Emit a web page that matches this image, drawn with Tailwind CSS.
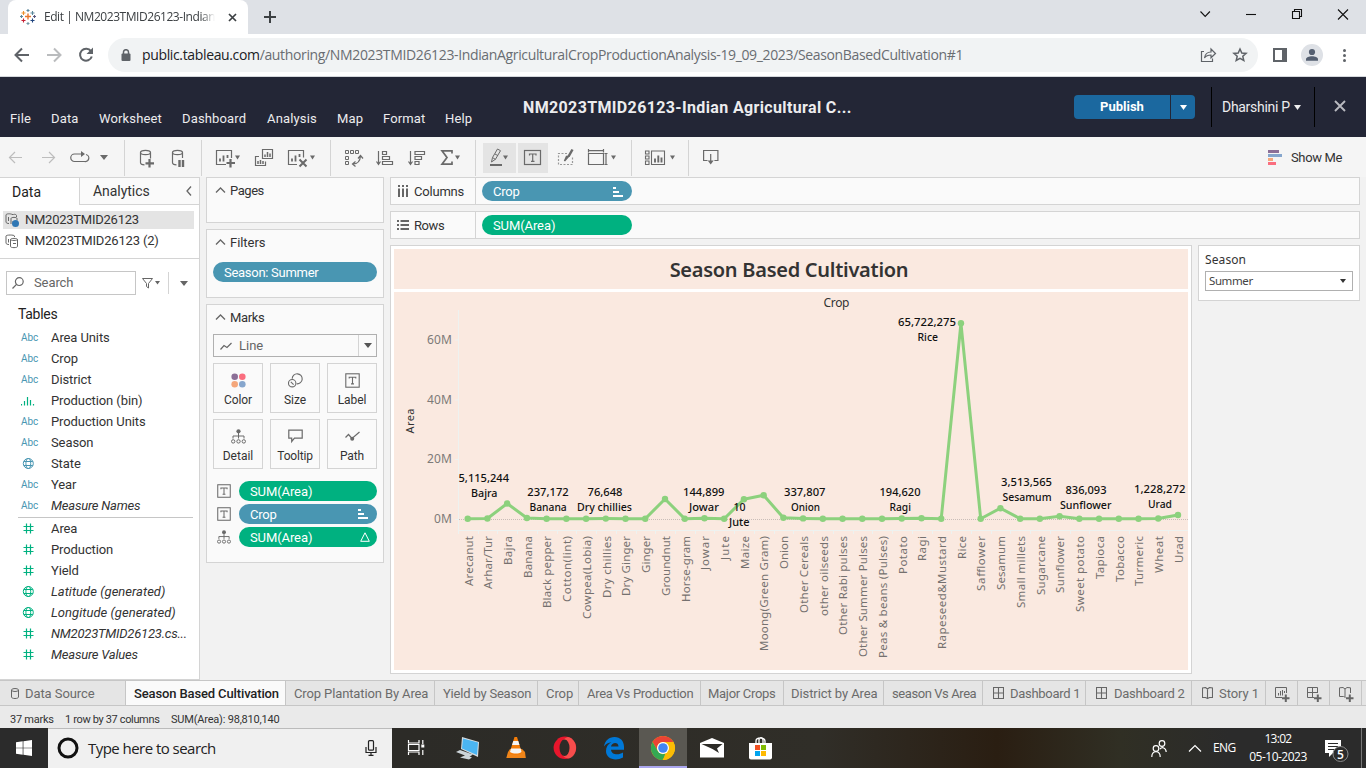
<!DOCTYPE html>
<html lang="en">
<head>
<meta charset="utf-8">
<title>Edit | NM2023TMID26123-Indian Agricultural Crop Production Analysis</title>
<script src="https://cdn.jsdelivr.net/npm/@tailwindcss/browser@4"></script>
</head>
<body class="w-[1366px] h-[768px] overflow-hidden flex flex-col bg-[#f2f2f2] font-['Roboto',sans-serif] text-[13px] text-[#333] leading-none whitespace-nowrap">

<!-- Browser tab strip -->
<div class="h-[34px] bg-[#dee1e6] flex shrink-0 font-['Open_Sans',sans-serif]">
  <div class="ml-2 w-60 h-[34px] bg-white rounded-t-lg flex items-center">
    <svg class="ml-3 w-4 h-4" viewBox="20 9 16 16" fill="none" stroke-width="1.1">
      <path stroke="#e8762d" stroke-width="1.4" d="M28 13.5v6M25 16.5h6"/>
      <path stroke="#eb912c" d="M23.5 11v4M21.5 13h4"/><path stroke="#5b879b" d="M32.5 11v4M30.5 13h4M28 9v3M26.5 10.5h3M21.500 15v3M20 16.500h3"/>
      <path stroke="#c72035" d="M23.500 18.500v4M21.500 20.500h4"/><path stroke="#1f447e" d="M32.500 18.500v4M30.500 20.500h4"/>
      <path stroke="#7099a6" d="M28 22v3M26.500 23.500h3"/><path stroke="#59587f" d="M34.500 15v3M33 16.500h3"/>
    </svg>
    <div class="ml-2 w-[171px] overflow-hidden text-[12px] leading-5 tracking-[-0.45px] text-[#3c4043] [mask-image:linear-gradient(to_right,#000_92%,transparent)]">Edit | NM2023TMID26123-Indian</div>
    <svg class="ml-[13px] w-[9px] h-[9px]" viewBox="0 0 9 9" stroke="#3c4043" stroke-width="1.7"><path d="M1 1l7 7M8 1l-7 7"/></svg>
  </div>
  <svg class="ml-4 mt-[11px] w-3 h-3" viewBox="0 0 12 12" stroke="#3c4043" stroke-width="2"><path d="M6 0v12M0 6h12"/></svg>
  <svg class="ml-auto w-[176px] h-[34px]" viewBox="1190 0 176 34" fill="none" stroke="#111" stroke-width="1.1">
    <path d="M1200.500 11.500l4.700 5 4.700-5"/><path d="M1246 14.500h10"/>
    <path d="M1292.500 11.500h7v7h-7zM1294.500 11v-1.500h7v7h-1.500"/><path d="M1338 9.500l10 10M1348 9.500l-10 10"/>
  </svg>
</div>

<!-- Address bar -->
<div class="h-[43px] bg-white border-b border-[#d5d8dc] flex items-center shrink-0 font-['Open_Sans',sans-serif]">
  <svg class="w-[108px] h-[42px] shrink-0" viewBox="0 34 108 42" fill="none" stroke-width="2">
    <path stroke="#5f6368" d="M29 55H16.500M22 48.500L15.500 55l6.500 6.500"/>
    <path stroke="#babcbe" d="M47 55h12.500M54 48.500l6.500 6.500-6.500 6.500"/>
    <path stroke="#5f6368" d="M91 51.200a6 6 0 1 0 .8 5.300"/><path fill="#5f6368" d="M93 47.500v6.500h-6.500z"/>
  </svg>
  <div class="w-[1150px] h-[34px] rounded-full bg-[#f1f3f4] flex items-center">
    <svg class="ml-[13px] w-[10px] h-[13px]" viewBox="0 0 10 13"><path fill="none" stroke="#5f6368" stroke-width="1.500" d="M2.500 5.500V3a2.500 2.300 0 0 1 5 0v2.500"/><rect x="0.500" y="4.500" width="9" height="7.500" rx="1" fill="#5f6368"/></svg>
    <div class="ml-[11px] text-[14px] leading-5 tracking-[-0.355px] text-[#696d72]"><span class="text-[#202124]">public.tableau.com</span>/authoring/NM2023TMID26123-IndianAgriculturalCropProductionAnalysis-19_09_2023/SeasonBasedCultivation#1</div>
    <svg class="ml-auto mr-[9px] w-[50px] h-5" viewBox="1199 45 50 20" fill="none" stroke="#5f6368" stroke-width="1.200">
      <path d="M1204 51.500h-2.500v10h11v-3M1204.500 58c.5-3.500 3-6 6.500-6v-3l4.500 4.500-4.500 4.300V55c-3 0-5 .8-6.500 3z"/>
      <path stroke-width="1.500" d="M1240 49l1.800 4 4.300.4-3.300 2.900 1 4.200-3.800-2.200-3.800 2.200 1-4.200-3.300-2.900 4.300-.4z"/>
    </svg>
  </div>
  <svg class="w-[108px] h-[42px]" viewBox="1258 34 108 42">
    <path fill="#5f6368" fill-rule="evenodd" d="M1273 48h14v14h-14zM1275 50v10h7v-10z"/>
    <circle cx="1312" cy="55" r="11" fill="#dee1e6"/><circle cx="1312" cy="52" r="3.100" fill="#535e70"/><path fill="#535e70" d="M1306 60.800v-1.500c0-2 3-3 6-3s6 1 6 3v1.500z"/>
    <g fill="#5f6368"><circle cx="1344.500" cy="50.500" r="1.500"/><circle cx="1344.500" cy="55.500" r="1.500"/><circle cx="1344.500" cy="60.500" r="1.500"/></g>
  </svg>
</div>

<!-- Tableau header -->
<div class="h-[60px] bg-[#232636] flex shrink-0 text-[#ececee]">
  <div class="flex items-end h-[50px] pl-[10px] w-[523px] leading-4 tracking-[0.15px]">
    <span class="w-[41px]">File</span><span class="w-12">Data</span><span class="w-[83px]">Worksheet</span><span class="w-[85px]">Dashboard</span><span class="w-[70px]">Analysis</span><span class="w-[46px]">Map</span><span class="w-[62px]">Format</span><span>Help</span>
  </div>
  <div class="w-[551px] pt-[21px] text-base font-bold leading-5 tracking-[0.36px]">NM2023TMID26123-Indian Agricultural C...</div>
  <div class="mt-[18px] w-24 h-6 bg-[#1b689f] rounded-l-sm text-center leading-6 text-white font-bold">Publish</div>
  <div class="mt-[18px] ml-px w-6 h-6 bg-[#1b689f] rounded-r-sm flex items-center justify-center"><svg class="w-[7px] h-[5px]" viewBox="0 0 7 5" fill="#fff"><path d="M0 0h7L3.500 5z"/></svg></div>
  <div class="mt-[10px] ml-4 w-[104px] h-10 border-x border-black flex items-center pl-[10px] tracking-[-0.3px] text-[14px]">Dharshini P<svg class="ml-1 w-[7px] h-[5px]" viewBox="0 0 7 5" fill="#eee"><path d="M0 0h7L3.500 5z"/></svg></div>
  <svg class="ml-[19px] mt-[23px] w-3 h-3" viewBox="0 0 12 12" stroke="#b9bac0" stroke-width="1.900"><path d="M1 1l10 10M11 1L1 11"/></svg>
</div>

<!-- Toolbar -->
<div class="h-10 bg-[#f5f5f5] flex shrink-0">
  <svg class="w-[689px] h-10" viewBox="0 137 689 40" fill="none" stroke="#6a6a6a" stroke-width="1.200">
    <path stroke="#d4d4d4" stroke-width="1" d="M124.500 140v36M201.500 140v36M330.500 140v36M475.500 140v36M631.500 140v36M688.500 140v36"/>
    <path stroke="#bdbdbd" d="M22 157.500H9.500M15 152l-5.500 5.500 5.500 5.500M42 157.500h12.500M49 152l5.500 5.500-5.500 5.500"/>
    <path d="M82 154h-7.500a3.300 3.300 0 0 0 0 7.500h10a3.300 3.300 0 0 0 1.500-7"/><path fill="#6a6a6a" stroke="none" d="M81 151l4 3-4 3zM100 155h8l-4 5z"/>
    <ellipse cx="145.500" cy="152.500" rx="5" ry="2.200"/><path d="M140.500 152.500v10c0 1.500 2 2.300 4 2.400M150.500 152.500v6"/>
    <path stroke-width="2.200" d="M149.500 159v8.500M145.500 163.300h8.500"/>
    <ellipse cx="177.500" cy="152.500" rx="5" ry="2.200"/><path d="M172.500 152.500v10c0 1.500 2 2.300 4 2.400M182.500 152.500v5.500"/><path stroke-width="2.400" d="M179.500 160v7M183 160v7"/>
    <!-- worksheet -->
    <path d="M226 164.500h-9.500v-14h15v7.500"/><path stroke-width="1.800" d="M220 161.500v-3M223.500 161.500v-6M227.500 158v-3"/><path stroke-width="2.200" d="M230.500 159v8.500M226.500 163h8.500"/>
    <path d="M262.500 154.500v-5h10v9h-10zM259 156.500h-3.500v9h10v-4"/><path stroke-width="1.500" d="M265 157v-2.500M267.500 157v-5M270 157v-3.500M258 164v-3M260.500 164v-4M263 164v-3"/>
    <path d="M297 164.500h-8.500v-14h15v7"/><path stroke-width="1.800" d="M292 161.500v-3M295.500 161.500v-6M299.500 157v-3"/><path stroke-width="2" d="M299.500 159.500l7 7M306.500 159.500l-7 7"/>
    <g fill="#6a6a6a" stroke="none"><path d="M235 155.500h5l-2.500 4zM310 155.500h5l-2.500 4zM455 155.500h5l-2.500 4zM611 155.500h5l-2.500 4zM670 155.500h5l-2.500 4z"/></g>
    <path stroke-width="1" d="M345.500 150.500h3v3h-3zM350.500 150.500h3v3h-3zM355.500 150.500h3v3h-3zM345.500 156.500h3v3h-3zM345.500 161.500h3v3h-3z"/><path d="M353 164c4 0 7-2 7.500-8M355.500 161.500l-3 2.500 3 2.500M358 158.500l2.500-3 2.500 3"/>
    <path d="M378.500 151v13M376.500 161.500l2 3 2-3M382.500 151.500h4v3h-4zM382.500 156.500h7v3h-7zM382.500 161.500h10v3h-10z"/>
    <path d="M410.500 151v13M408.500 161.500l2 3 2-3M415 151.500h9.500v3H415zM415 156.500h6.500v3H415zM415 161.500h4v3h-4z"/>
    <path stroke-width="1.700" d="M452 153.500v-2.700h-10l5 6.700-5 6.700h10v-2.700"/>
    <rect x="483" y="143" width="33" height="30" fill="#e4e4e4" stroke="none"/><rect x="518" y="143" width="30" height="30" fill="#e4e4e4" stroke="none"/>
    <path stroke-width="1" d="M491.500 162l1-4.500 5-8.500 3 1.700-5 8.500zM492.500 157.500l3 2M495 154l3 1.700"/><path stroke-width="2" d="M490 165h12"/><path fill="#6a6a6a" stroke="none" d="M503 155.500h5l-2.500 4z"/>
    <rect x="524.500" y="150.500" width="16" height="14"/><path d="M529.500 155.500v-1.500h6.500v1.500M532.700 154v7M531 161.300h3.500"/>
    <path stroke="#999" stroke-dasharray="2 1.500" d="M567 153.500h-8.500v11h14v-7"/><path stroke-width="2.500" d="M572.500 149.500l-4 7"/><path stroke-width="1.500" d="M568.500 156.500l-4 4.500 2-4.500z"/>
    <path d="M588.500 153.500h15v11h-15zM588.500 149v3.500M603.500 149v3.500M588.500 150.700h15M604.500 153.500h3M606 153.500v11M604.500 164.500h3"/>
    <path stroke-width="1.100" d="M645.500 151h3.500v3h-3.500zM645.500 156h3.500v3h-3.500zM645.500 161h3.500v3.500h-3.500zM651.500 151h13v13.500h-13z"/><path stroke-width="1.900" d="M655 162.500v-4M658.300 162.500v-7M661.500 162.500v-5"/>
  </svg>
  <svg class="ml-[14px] mt-3 w-4 h-4" viewBox="0 0 16 16" fill="none" stroke="#6a6a6a" stroke-width="1.200"><path d="M4.500 11.500H.6v-10h14.300v10h-3.500M7.700 5v9"/><path fill="#6a6a6a" stroke="none" d="M4.700 11.500h6l-3 4z"/></svg>
  <svg class="ml-auto mt-[13px] w-[14px] h-[15px]" viewBox="0 0 14 15"><path fill="#8c6f97" d="M0 0h11v3H0z"/><path fill="#86a6cd" d="M0 4h14v3H0z"/><path fill="#f4a77b" d="M0 8h5v3H0z"/><path fill="#fa6e7f" d="M0 12h8v3H0z"/></svg>
  <div class="ml-[9px] w-[75px] leading-10 pt-px tracking-[-0.35px]">Show Me</div>
</div>

<!-- Workspace -->
<div class="h-[503px] flex shrink-0">
  <!-- Data pane -->
  <div class="w-[200px] bg-white border-r border-b border-[#d4d4d4] flex flex-col">
    <div class="flex h-7 text-sm leading-7 border-t border-[#d4d4d4] shrink-0">
      <div class="w-[79px] pl-3 text-[#222]">Data</div>
      <div class="flex-1 bg-[#fafafa] border-l border-b border-[#d4d4d4] pl-[13px] flex items-center justify-between pr-[7px] tracking-[-0.05px]">Analytics<svg class="w-[6px] h-[10px]" viewBox="0 0 6 10" fill="none" stroke="#666" stroke-width="1.300"><path d="M5 .5L1 5l4 4.500"/></svg></div>
    </div>
    <div class="mt-[6px] ml-[3px] w-[191px] h-[18px] bg-[#e4e4e4] flex items-center pl-[2px] text-[13px]">
      <svg class="w-[15px] h-[15px]" viewBox="0 0 15 15" fill="none" stroke="#666"><path d="M11.500 4V2.500c0-1-2-1.500-3-1l-1.500 0C6 .5 1 .5 1 2v7c0 1 1.500 1.500 3 1.500M3.500 4v4M6 11V5.500c0-1.500 6-1.500 6 0v2M8 8v2"/><circle cx="10.500" cy="10.500" r="3.500" fill="#2f77b4" stroke="none"/></svg>
      <span class="ml-[5px] -mt-[2px] tracking-[-0.25px]">NM2023TMID26123</span></div>
    <div class="mt-[3px] ml-[3px] h-[18px] flex items-center pl-[2px]">
      <svg class="w-[15px] h-[15px]" viewBox="0 0 15 15" fill="none" stroke="#666"><path d="M9.500 3V2C9.500.7 1 .7 1 2v7c0 1 1.500 1.500 3 1.500M3.500 5v3.500M5.500 5.500c0-1.500 7-1.500 7 0v7c0 1.500-7 1.500-7 0zM5.500 5.500c0 1.300 7 1.300 7 0M8 9.500h3"/></svg>
      <span class="ml-[5px] -mt-[2px] tracking-[-0.18px]">NM2023TMID26123 (2)</span></div>
    <div class="mt-2 border-t border-[#d4d4d4] pt-3 pl-[6px] flex items-center">
      <div class="w-[130px] h-6 border border-[#c6c6c6] flex items-center text-[#666]"><svg class="ml-[5px] w-3 h-3" viewBox="0 0 12 12" fill="none" stroke="#666" stroke-width="1.200"><circle cx="7.300" cy="4.600" r="3.900"/><path d="M4.500 7.400L.5 11.500"/></svg><span class="ml-[10px] -mt-px tracking-[-0.1px]">Search</span></div>
      <svg class="ml-[6px] w-[50px] h-[22px]" viewBox="142 272 50 22" fill="none" stroke="#666"><path d="M142.500 278.500h10l-4 5v4.500l-2-1.500v-3z"/><path fill="#666" stroke="none" d="M155 281h5l-2.500 3.500zM180 281h8l-4 5z"/><path stroke="#d4d4d4" d="M168.500 272v22"/></svg>
    </div>
    <div class="mt-[10px] pl-[18px] text-sm leading-[18px] h-[22px] tracking-[-0.3px] text-[#222]">Tables</div>
    <div id="dims"></div>
    <div class="ml-[18px] w-[175px] border-t border-[#c6c6c6] mt-px"></div>
    <div id="meas"></div>
  </div>

  <!-- Shelf cards -->
  <div class="ml-[6px] w-[178px] flex flex-col gap-[6px]">
    <div class="h-[46px] border border-[#d4d4d4] bg-[#fafafa] pl-2 pt-[5px]"><div class="flex items-center h-4 -mt-px tracking-[-0.45px]"><svg class="w-[11px] h-[6px] mr-1" viewBox="0 0 11 6" fill="none" stroke="#666" stroke-width="1.300"><path d="M1 5.500l4.500-4.500L10 5.500"/></svg>Pages</div></div>
    <div class="h-[69px] border border-[#d4d4d4] bg-[#fafafa] pl-2 pt-[5px]"><div class="flex items-center h-4 -mt-px tracking-[-0.05px]"><svg class="w-[11px] h-[6px] mr-1" viewBox="0 0 11 6" fill="none" stroke="#666" stroke-width="1.300"><path d="M1 5.500l4.500-4.500L10 5.500"/></svg>Filters</div>
      <div class="mt-3 -ml-[2px] w-[164px] h-5 rounded-full bg-[#4996b2] text-white leading-[21px] pl-[11px] tracking-[-0.28px]">Season: Summer</div></div>
    <div class="h-[259px] border border-[#d4d4d4] bg-[#fafafa] pl-[6px] pt-[5px]"><div class="pl-[2px] flex items-center h-4 -mt-px tracking-[-0.35px]"><svg class="w-[11px] h-[6px] mr-1" viewBox="0 0 11 6" fill="none" stroke="#666" stroke-width="1.300"><path d="M1 5.500l4.500-4.500L10 5.500"/></svg>Marks</div>
      <div class="mt-[9px] w-[164px] h-[23px] border border-[#b0b0b0] flex items-center text-[#666]">
        <svg class="ml-[6px] w-3 h-2" viewBox="0 0 12 8" fill="none" stroke="#666" stroke-width="1.200"><path d="M.5 7.500l3.500-4 3 2L11.500 1"/></svg><span class="ml-[7px]">Line</span>
        <div class="ml-auto w-[18px] h-full border-l border-[#d4d4d4] flex items-center justify-center"><svg class="w-2 h-[5px]" viewBox="0 0 8 5" fill="#555"><path d="M0 0h8L4 5z"/></svg></div></div>
      <div class="mt-[6px] w-[164px] grid grid-cols-3 gap-x-[7px] gap-y-[6px] text-center text-[12px]">
        <div class="h-[50px] border border-[#d4d4d4] flex flex-col items-center pt-[9px]"><svg class="w-[15px] h-[15px]" viewBox="0 0 15 15"><circle cx="3.700" cy="3.700" r="3.300" fill="#8c6f97"/><circle cx="11.300" cy="3.700" r="3.300" fill="#fa6e7f"/><circle cx="3.700" cy="11.300" r="3.300" fill="#f4a77b"/><circle cx="11.300" cy="11.300" r="3.300" fill="#86a6cd"/></svg><span class="mt-[6px] tracking-[-0.1px]">Color</span></div>
        <div class="h-[50px] border border-[#d4d4d4] flex flex-col items-center pt-[9px]"><svg class="w-[15px] h-[15px]" viewBox="0 0 15 15" fill="none" stroke="#6a6a6a" stroke-width="1.100"><path d="M4.200 5.800a5 5 0 1 1 4.500 5"/><circle cx="4.200" cy="10.200" r="3.700"/><path d="M2.800 8.800l2.800 2.800"/></svg><span class="mt-[6px] tracking-[-0.1px]">Size</span></div>
        <div class="h-[50px] border border-[#d4d4d4] flex flex-col items-center pt-[9px]"><svg class="w-[15px] h-[15px]" viewBox="0 0 15 15" fill="none" stroke="#6a6a6a" stroke-width="1.100"><rect x=".8" y=".8" width="13.400" height="13.400"/><path d="M4.200 5.500V4.200h6.600v1.300M7.500 4.200v6.500M6 10.900h3"/></svg><span class="mt-[6px] tracking-[-0.1px]">Label</span></div>
        <div class="h-[50px] border border-[#d4d4d4] flex flex-col items-center pt-[9px]"><svg class="w-[15px] h-[15px]" viewBox="0 0 15 15" fill="none" stroke="#6a6a6a"><circle cx="7.500" cy="2.300" r="2.100" fill="#6a6a6a" stroke="none"/><path d="M7.500 4v5.500M2 9.500V7h11v2.500"/><circle cx="2.200" cy="12.400" r="1.700"/><circle cx="7.500" cy="12.400" r="1.700"/><circle cx="12.800" cy="12.400" r="1.700"/></svg><span class="mt-[6px]">Detail</span></div>
        <div class="h-[50px] border border-[#d4d4d4] flex flex-col items-center pt-[9px]"><svg class="w-[15px] h-[15px]" viewBox="0 0 15 15" fill="none" stroke="#6a6a6a" stroke-width="1.200"><path d="M.8 1.200h13.400v8H6.500L3.700 12.500V9.200H.8z"/></svg><span class="mt-[6px] tracking-[-0.2px]">Tooltip</span></div>
        <div class="h-[50px] border border-[#d4d4d4] flex flex-col items-center pt-[9px]"><svg class="w-[15px] h-[15px]" viewBox="0 0 15 15" fill="none" stroke="#6a6a6a" stroke-width="1.200"><path d="M.5 8.500l3-3 3.500 4L14.500 3"/><circle cx="7.200" cy="9.800" r="2" fill="#6a6a6a" stroke="none"/></svg><span class="mt-[6px] tracking-[-0.1px]">Path</span></div>
      </div>
      <div class="mt-3 flex flex-col gap-[3px] text-white">
        <div class="flex items-center"><svg class="ml-[4px] mr-2 w-[14px] h-[14px]" viewBox="0 0 15 15" fill="none" stroke="#6a6a6a" stroke-width="1.100"><rect x=".8" y=".8" width="13.400" height="13.400"/><path d="M4.200 5.500V4.200h6.600v1.300M7.500 4.200v6.500M6 10.900h3"/></svg><div class="w-[138px] h-5 rounded-full bg-[#00b180] pl-[11px] leading-[21px] tracking-[-0.1px]">SUM(Area)</div></div>
        <div class="flex items-center"><svg class="ml-[4px] mr-2 w-[14px] h-[14px]" viewBox="0 0 15 15" fill="none" stroke="#6a6a6a" stroke-width="1.100"><rect x=".8" y=".8" width="13.400" height="13.400"/><path d="M4.200 5.500V4.200h6.600v1.300M7.500 4.200v6.500M6 10.900h3"/></svg><div class="w-[138px] h-5 rounded-full bg-[#4996b2] pr-[9px] pl-[11px] leading-[21px] flex items-center justify-between tracking-[-0.2px]">Crop<svg class="w-[10px] h-[10px]" viewBox="0 0 10 10" fill="#fff"><path d="M0 0h3v2H0zM0 4h6v2H0zM0 8h10v2H0z"/></svg></div></div>
        <div class="flex items-center"><svg class="ml-[4px] mr-2 w-[14px] h-[14px]" viewBox="0 0 15 15" fill="none" stroke="#6a6a6a"><circle cx="7.500" cy="2.300" r="2.100" fill="#6a6a6a" stroke="none"/><path d="M7.500 4v5.500M2 9.500V7h11v2.500"/><circle cx="2.200" cy="12.400" r="1.700"/><circle cx="7.500" cy="12.400" r="1.700"/><circle cx="12.800" cy="12.400" r="1.700"/></svg><div class="w-[138px] h-5 rounded-full bg-[#00b180] pl-[11px] pr-[7px] leading-[21px] flex items-center justify-between tracking-[-0.1px]">SUM(Area)<svg class="w-[10px] h-[10px]" viewBox="0 0 10 10" fill="none" stroke="#fff"><path d="M5 .8L9.300 9.300H.7z"/></svg></div></div>
      </div>
    </div>
  </div>

  <!-- Columns, rows and view -->
  <div class="ml-[6px] w-[970px] flex flex-col gap-[6px]">
    <div class="h-7 border border-[#d4d4d4] bg-[#fafafa] flex items-center">
      <div class="w-[85px] h-full border-r border-[#d4d4d4] flex items-center pl-[7px] tracking-[-0.2px]"><svg class="w-[10px] h-3 mr-[6px]" viewBox="0 0 10 12" fill="#666"><path d="M0 0h2v2H0zM4 0h2v2H4zM8 0h2v2H8zM0 3.500h2V12H0zM4 3.500h2V12H4zM8 3.500h2V12H8z"/></svg>Columns</div>
      <div class="ml-[6px] w-[150px] h-5 rounded-full bg-[#4996b2] pl-[11px] pr-[9px] text-white leading-[21px] flex items-center justify-between tracking-[-0.2px]">Crop<svg class="mt-px w-[10px] h-[10px]" viewBox="0 0 10 10" fill="#fff"><path d="M0 0h3v2H0zM0 4h6v2H0zM0 8h10v2H0z"/></svg></div>
    </div>
    <div class="h-7 border border-[#d4d4d4] bg-[#fafafa] flex items-center">
      <div class="w-[85px] h-full border-r border-[#d4d4d4] flex items-center pl-[6px] tracking-[-0.4px]"><svg class="w-3 h-[10px] mr-[5px]" viewBox="0 0 12 10" fill="#666"><path d="M0 0h2v2H0zM0 4h2v2H0zM0 8h2v2H0zM3.500 0H12v2H3.500zM3.500 4H12v2H3.500zM3.500 8H12v2H3.500z"/></svg>Rows</div>
      <div class="ml-[6px] w-[150px] h-5 rounded-full bg-[#00b180] pl-[11px] text-white leading-[21px] tracking-[-0.1px]">SUM(Area)</div>
    </div>
    <div class="flex gap-[6px] items-start font-['Noto_Sans',sans-serif]">
      <div class="w-[802px] h-[429px] border border-[#d4d4d4] bg-white p-[3px] flex flex-col gap-[3px]">
        <div class="h-10 w-[794px] bg-[#fae9e0] text-center text-[20px] leading-[42px] tracking-[-0.27px] font-semibold pr-1">Season Based Cultivation</div>
        <svg id="plot" class="h-[378px] w-[794px] bg-[#fae9e0]" viewBox="394 292 794 378"></svg>
      </div>
      <div class="w-[162px] h-14 border border-[#d4d4d4] bg-white pl-[6px] pt-[5px] text-xs leading-[18px] tracking-[0.1px]">Season
        <div class="mt-[2px] w-[148px] h-5 border border-[#b0b0b0] pl-[3px] pr-[6px] flex items-center justify-between text-[11.5px] tracking-[-0.4px] text-[#444]">Summer<svg class="w-[6px] h-1" viewBox="0 0 6 4" fill="#333"><path d="M0 0h6L3 4z"/></svg></div>
      </div>
    </div>
  </div>
</div>

<!-- Sheet tabs -->
<div class="h-[26px] bg-[#e5e5e5] border-y border-[#c6c6c6] flex shrink-0 leading-[25px] text-[#6b6b6b] tracking-[-0.08px]">
  <div class="w-[126px] border-r border-[#c6c6c6] pl-[11px] flex items-center"><svg class="w-2 h-[11px] mr-[6px] mt-px" viewBox="0 0 8 11" fill="none" stroke="#666"><ellipse cx="4" cy="2" rx="3.500" ry="1.500"/><path d="M.5 2v7c0 2 7 2 7 0V2"/></svg>Data Source</div>
  <div class="w-40 border-r border-[#c6c6c6] bg-[#fafafa] pl-[8px] text-[#222] font-medium tracking-[-0.13px]">Season Based Cultivation</div>
  <div class="w-[149px] border-r border-[#c6c6c6] pl-[8px] tracking-[-0.12px]">Crop Plantation By Area</div>
  <div class="w-[103px] border-r border-[#c6c6c6] pl-[8px] tracking-[-0.2px]">Yield by Season</div>
  <div class="w-[41px] border-r border-[#c6c6c6] pl-[8px]">Crop</div>
  <div class="w-[122px] border-r border-[#c6c6c6] pl-[8px] tracking-[-0.28px]">Area Vs Production</div>
  <div class="w-[83px] border-r border-[#c6c6c6] pl-[7px] tracking-[-0.3px]">Major Crops</div>
  <div class="w-[100px] border-r border-[#c6c6c6] pl-[7px]">District by Area</div>
  <div class="w-[99px] border-r border-[#c6c6c6] pl-[8px] tracking-[-0.42px]">season Vs Area</div>
  <div class="w-[103px] border-r border-[#c6c6c6] pl-[10px] flex items-center tracking-[-0.28px]"><svg class="w-[11px] h-3 mr-[6px]" viewBox="0 0 11 12" fill="none" stroke="#666" stroke-width="1.100"><path d="M.5.500h10v11H.5zM5.500.500v11M.5 6h10"/></svg>Dashboard 1</div>
  <div class="w-[106px] border-r border-[#c6c6c6] pl-[10px] flex items-center tracking-[-0.25px]"><svg class="w-[11px] h-3 mr-[7px]" viewBox="0 0 11 12" fill="none" stroke="#666" stroke-width="1.100"><path d="M.5.500h10v11H.5zM5.500.500v11M.5 6h10"/></svg>Dashboard 2</div>
  <div class="w-[74px] border-r border-[#c6c6c6] pl-[10px] flex items-center"><svg class="w-[11px] h-3 mr-[6px]" viewBox="0 0 11 12" fill="none" stroke="#666" stroke-width="1.100"><path d="M.5 1L3.500.5l2 1.500 2-1.500 3 .5v9.500h-3l-2 1-2-1h-3zM5.500 2v9"/></svg>Story 1</div>
  <div class="w-8 border-r border-[#c6c6c6] flex items-center justify-center"><svg class="mt-[3px] w-4 h-[17px]" viewBox="0 0 16 17" fill="none" stroke="#666"><path d="M8 11.500H1.500v-10h11V7M4.500 9.500V7M6.500 9.500V5M8.500 9.500V4M10.500 7V5"/><path stroke-width="2" d="M11.800 8.500v7.500M8 12.200h7.500"/></svg></div>
  <div class="w-8 border-r border-[#c6c6c6] flex items-center justify-center"><svg class="mt-[3px] w-4 h-[17px]" viewBox="0 0 16 17" fill="none" stroke="#666"><path d="M8 11.500H1.500v-10h10V7M6.500 1.500v10M1.500 6.500h10"/><path stroke-width="2" d="M11.800 8.500v7.500M8 12.200h7.500"/></svg></div>
  <div class="w-8 border-r border-[#c6c6c6] flex items-center justify-center"><svg class="mt-[3px] w-4 h-[17px]" viewBox="0 0 16 17" fill="none" stroke="#666"><path d="M7.500 11.500l-2-1h-4V1.800L5 1.500 7 3l2-1.500 3.500.3V7M7 3v8"/><path stroke-width="2" d="M11.800 8.500v7.500M8 12.200h7.500"/></svg></div>
</div>

<!-- Status bar -->
<div class="h-[22px] bg-[#eaeaea] flex shrink-0 text-[11px] leading-[28px] pl-[10px] gap-3"><span class="w-[43px] tracking-[-0.25px]">37 marks</span><span class="w-[94px] tracking-[-0.35px]">1 row by 37 columns</span><span class="tracking-[-0.2px]">SUM(Area): 98,810,140</span></div>

<!-- Windows taskbar -->
<div class="h-10 flex shrink-0 bg-[linear-gradient(to_right,#2b2b2b_0,#2c2b27_30%,#302e28_60%,#2a1e12_73%,#302f24_82%,#2b2b2b_90%,#2b2b2b)] font-['Open_Sans',sans-serif]">
  <div class="w-12 bg-[#2b2b2b] flex items-center justify-center"><svg class="w-4 h-4" viewBox="0 0 16 16" fill="#fff"><path d="M0 2.300L6.700 1.300v6.400H0zM7.400 1.200L16 0v7.700H7.400zM0 8.300h6.700v6.400L0 13.800zM7.400 8.300H16V16l-8.600-1.200z"/></svg></div>
  <div class="w-[344px] bg-[#f0f0f0] flex items-center border-t border-[#bbb] text-[#222]">
    <svg class="ml-[9px] -mt-px w-[22px] h-[22px]" viewBox="0 0 22 22" fill="none" stroke="#111" stroke-width="3"><circle cx="11" cy="11" r="9"/></svg>
    <span class="ml-[9px] -mt-[2px] text-[15px] leading-5 tracking-[-0.54px]">Type here to search</span>
    <svg class="ml-auto mr-[15px] -mt-px w-3 h-4" viewBox="0 0 12 16" fill="none" stroke="#222" stroke-width="1.200"><rect x="3.500" y=".7" width="5" height="9.500" rx="1"/><path d="M1 7v5.500h10V7M6 12.500V15M3.500 15.300h5"/></svg>
  </div>
  <svg class="w-[394px] h-10" viewBox="392 728 394 40">
    <g fill="none" stroke="#fff" stroke-width="1.200"><path d="M408.500 740v3h10.500v-3M408.500 755v-3H419v3M408.500 744.500H419v6h-10.500zM422.800 740v4M422.800 750v5"/></g><path fill="#fff" d="M421.300 744.500h3v3h-3z"/>
    <path fill="#d8dde0" d="M462 737l17 5-1 15-17-8z"/><path fill="#4bb5f2" d="M463 738.500l15 4-1 12.500-15-6.500z"/><path fill="#cdd5d9" d="M456 752l4-2 13 4.500-4 2.500zM466 755l6 2.500-3 2-9-2z"/>
    <path fill="#f08519" d="M508 752l2-3h12l3 3 .8 6h-19.500z"/><path fill="#f47c08" d="M514.500 737h2.500l5 16c-3 2.500-9.500 2.500-12.500 0z"/><path fill="#f4f4f4" d="M513.300 741h5l1.200 4h-7.500zM511 748.500h9.700l.8 3.500c-3 2-8 2-11.500 0z"/>
    <ellipse cx="564.900" cy="747.800" rx="11.300" ry="11.200" fill="#e8162c"/><path fill="#ff6b5e" d="M568 737c10 2 11 18 1 21.500-5 0-8-4-8-10.500s3-10 7-11z" opacity=".65"/><ellipse cx="564.500" cy="747.800" rx="5" ry="8.300" fill="#2c2b27"/>
    <path fill="#0078d7" d="M604 746.500c.8-5.500 4.800-9.500 10.500-9.500 6 0 9.500 4.300 9.500 9.800v3h-13c.3 5 7.500 5.800 12 2.700v5c-7.500 4-17 1.500-17-6.500 0-4 2-7 5.500-8.800-3 .3-5.700 1.800-7.500 4.300zM611 746.500h7.500c0-4.800-6.800-4.300-7.500 0z"/>
    <path fill="#5a5852" d="M639 728h48v40h-48z"/><path fill="#aaa6ee" d="M639 766h48v2h-48z"/>
    <circle cx="663" cy="748" r="12" fill="#fbbc05"/><path fill="#ea4335" d="M652.600 742A12 12 0 0 1 673.400 742H663a6 6 0 0 0-5.200 9z"/><path fill="#34a853" d="M652.600 742l5.200 9a6 6 0 0 0 7.500 2.500L663 760a12 12 0 0 1-10.400-18z"/><path fill="#fbbc05" d="M673.400 742A12 12 0 0 1 662.500 760l5.700-9a6 6 0 0 0-1.200-9z"/><circle cx="663" cy="748" r="6" fill="#fff"/><circle cx="663" cy="748" r="4.800" fill="#4285f4"/>
    <path fill="#fff" d="M700 743l12-5 12 5v14.500h-24z"/><path fill="#2c2b27" d="M701.500 744h21l-5.500 4.500 2 4.500-6.500-4z"/>
    <path fill="#fff" d="M749 743h23v14.500a2 2 0 0 1-2 2h-19a2 2 0 0 1-2-2z"/><path fill="none" stroke="#fff" stroke-width="1.300" d="M756 743v-2c0-4 9-4 9 0v2M759 743v-3c0-3 4-3 4 0v3"/><path fill="#f25022" d="M755 745h5v5h-5z"/><path fill="#7fba00" d="M761 745h5v5h-5z"/><path fill="#00a4ef" d="M755 751h5v5h-5z"/><path fill="#ffb900" d="M761 751h5v5h-5z"/>
  </svg>
  <svg class="ml-auto w-[60px] h-10" viewBox="1150 728 60 40" fill="none" stroke="#fff" stroke-width="1.200"><circle cx="1156" cy="748.500" r="2.800"/><path d="M1151.800 757c0-7 8.400-7 8.400 0"/><circle cx="1162" cy="743.500" r="2.800"/><path d="M1160 749c2-2.300 6-1.500 6.200 3"/><path d="M1189 751.500l6-6 6 6"/></svg>
  <div class="ml-[3px] w-9 text-white text-xs leading-[39px] tracking-[-0.6px]">ENG</div>
  <div class="w-[58px] text-white text-xs leading-[18px] pt-[2px] text-center tracking-[-0.5px]"><span class="tracking-[-0.7px]">13:02</span><br>05-10-2023</div>
  <div class="w-[59px] pl-[18px] flex items-center"><svg class="w-[26px] h-[28px]" viewBox="1325 734 26 28"><path fill="#fff" d="M1325 740h16v13h-8l-4 4v-4h-4z"/><path stroke="#2b2b2b" d="M1328 743.500h10M1328 746.500h10M1328 749.500h7"/><circle cx="1340.500" cy="754" r="7.500" fill="#2b2b2b" stroke="#8a8a8a"/><text x="1340.500" y="758.500" text-anchor="middle" font-size="12" font-weight="600" fill="#fff">5</text></svg><div class="ml-[10px] w-px h-10 bg-[#777] shrink-0"></div></div>
</div>

<script>
const abc = '<span class="w-[17px] text-[10px] text-[#4996b2] tracking-[-0.1px]">Abc</span>';
const bars = '<svg class="w-[17px] h-[10px]" viewBox="0 0 17 10" stroke="#00b180" stroke-width="1.2"><path d="M.5 9.500V8M3.500 9.500V5M6.500 9.500V1M9.500 9.500V4M12.500 9.500V8"/></svg>';
const globe = c => `<svg class="w-[17px] h-[11px]" viewBox="0 0 17 11" fill="none" stroke="${c}"><circle cx="7.300" cy="5.500" r="5"/><ellipse cx="7.300" cy="5.500" rx="2.400" ry="5"/><path d="M2.800 3.500h9M2.800 7.500h9"/></svg>`;
const hash = '<svg class="w-[17px] h-[11px]" viewBox="0 0 17 11" fill="none" stroke="#00b180" stroke-width="1.2"><path d="M5.500 .500v10M9.500 .500v10M2.500 3.500h10M2.500 7.500h10"/></svg>';
const row = ([icon, name, style]) => `<div class="h-[21px] flex items-center pl-[21px]">${icon}<span class="ml-[13px] ${style}">${name}</span></div>`;
const norm = 'tracking-[-0.1px]', it = 'italic tracking-[0.03px]', tight = 'italic tracking-[-0.22px]';
dims.innerHTML = [[abc,'Area Units',norm],[abc,'Crop',norm],[abc,'District',norm],[bars,'Production (bin)',norm],[abc,'Production Units',norm],[abc,'Season',norm],[globe('#4996b2'),'State',norm],[abc,'Year',norm],[abc,'Measure Names',tight]].map(row).join('');
meas.innerHTML = [[hash,'Area',norm],[hash,'Production',norm],[hash,'Yield',norm],[globe('#00b180'),'Latitude (generated)',it],[globe('#00b180'),'Longitude (generated)',it],[hash,'NM2023TMID26123.cs...',tight],[hash,'Measure Values',tight]].map(row).join('');

// crop name, label length, y of the mark
const crops = [['Arecanut',50,518.7],['Arhar/Tur',53,518.5],['Bajra',29,503.5],['Banana',42,518],['Black pepper',72,518.7],['Cotton(lint)',66,518.7],['Cowpea(Lobia)',83,518.7],['Dry chillies',62,518.6],['Dry Ginger',60,518.7],['Ginger',37,518.7],['Groundnut',60,499],['Horse-gram',66,518.7],['Jowar',34,518.3],['Jute',24,518.7],['Maize',33,499.3],['Moong(Green Gram)',115,495.3],['Onion',33,517.8],['Other Cereals',77,518.4],['other oilseeds',80,518.7],['Other Rabi pulses',99,518.7],['Other Summer Pulses',121,518.7],['Peas & beans (Pulses)',122,518.7],['Potato',38,518.5],['Ragi',25,518.2],['Rapeseed&Mustard',113,518.7],['Rice',23,323.3],['Safflower',55,518.7],['Sesamum',54,508.2],['Small millets',72,518.7],['Sugarcane',59,518.7],['Sunflower',57,516.2],['Sweet potato',76,518.7],['Tapioca',43,518.7],['Tobacco',46,518.7],['Turmeric',50,518.7],['Wheat',37,518.5],['Urad',27,515]];
const step = 19.73, X = i => 467.7 + i * step, esc = s => s.replace('&', '&amp;');
let s = '<g stroke="#eef2f0" fill="none"><path d="M458.500 310v220.500H1188M455 519.500h3M455 459.500h3M455 400h3M455 340h3"/>';
for (let i = 0; i <= 36; i++) s += `<path d="M${458.5 + Math.round(i * step)} 530v4"/>`;
s += '</g><path d="M459 519.500H1188" stroke="#c9bdb8" stroke-dasharray="1 1"/>';
s += '<text x="836.500" y="307" text-anchor="middle" font-size="12" textLength="26" fill="#333">Crop</text><text transform="translate(414,421) rotate(-90)" text-anchor="middle" font-size="11" textLength="25" fill="#333">Area</text>';
[['60M',344],['40M',404],['20M',463],['0M',523]].forEach(([t,y]) => s += `<text x="452" y="${y}" text-anchor="end" font-size="12" textLength="${t.length > 2 ? 25 : 18}" fill="#7d7a78">${t}</text>`);
crops.forEach(([n,l],i) => s += `<text transform="translate(${X(i) + 4.8},${536 + l}) rotate(-90)" font-size="11.500" textLength="${l}" fill="#75716f">${esc(n)}</text>`);
s += `<polyline fill="none" stroke="#8cd17d" stroke-width="3" stroke-linejoin="round" points="${crops.map((c,i) => X(i) + ',' + c[2]).join(' ')}"/>`;
crops.forEach((c,i) => s += `<circle cx="${X(i)}" cy="${c[2]}" r="3.200" fill="#8cd17d"/>`);
[['5,115,244',458.5,509,482],['Bajra',471,497.5,496.7],['237,172',527.3,568.7,496],['Banana',529.5,566.7,511],['76,648',587.5,622.5,496],['Dry chillies',577,632,511],['144,899',683,724.5,496],['Jowar',689,719,511],['10',733.5,745.5,511],['Jute',729,749.5,526],['337,807',784,825.5,496],['Onion',791,820,511],['194,620',879.5,920.5,496],['Ragi',889.5,911,511],['65,722,275',898,956,326],['Rice',917.5,938,341],['3,513,565',1001,1052,486],['Sesamum',1002.5,1051.5,501],['836,093',1065.5,1106.5,494],['Sunflower',1060,1111.5,509],['1,228,272',1134,1185.5,493],['Urad',1148,1172,508]]
  .forEach(([t,a,b,y]) => s += `<text x="${a}" y="${y}" font-size="11.500" font-weight="500" textLength="${b - a}" lengthAdjust="spacingAndGlyphs" fill="#111">${t}</text>`);
plot.innerHTML = s;
</script>
</body>
</html>
